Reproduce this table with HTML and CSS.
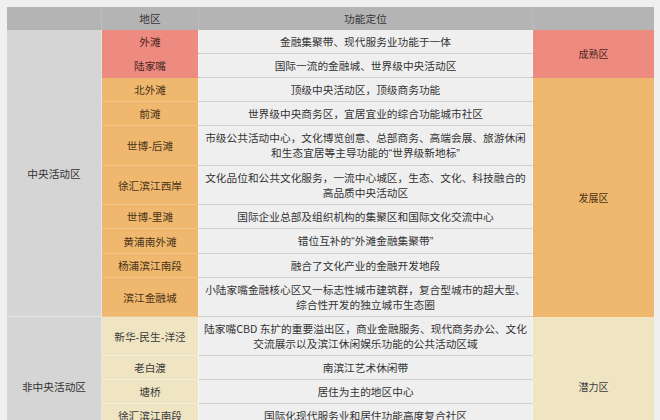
FILE: index.html
```html
<!DOCTYPE html>
<html lang="zh-CN">
<head>
<meta charset="utf-8">
<link rel="stylesheet" href="styles.css">
</head>
<body>
<table class="zones">
  <thead>
    <tr>
      <th class="c1"></th>
      <th class="c2">地区</th>
      <th class="c3">功能定位</th>
      <th class="c4"></th>
    </tr>
  </thead>
  <tbody>
    <tr>
      <td class="c1 cat" rowspan="10">中央活动区</td>
      <td class="c2 red">外滩</td>
      <td class="c3">金融集聚带、现代服务业功能于一体</td>
      <td class="c4 red lvl" rowspan="2">成熟区</td>
    </tr>
    <tr>
      <td class="c2 red">陆家嘴</td>
      <td class="c3">国际一流的金融城、世界级中央活动区</td>
    </tr>
    <tr>
      <td class="c2 orange">北外滩</td>
      <td class="c3">顶级中央活动区，顶级商务功能</td>
      <td class="c4 orange lvl" rowspan="8">发展区</td>
    </tr>
    <tr>
      <td class="c2 orange">前滩</td>
      <td class="c3">世界级中央商务区，宜居宜业的综合功能城市社区</td>
    </tr>
    <tr>
      <td class="c2 orange">世博-后滩</td>
      <td class="c3">市级公共活动中心，文化博览创意、总部商务、高端会展、旅游休闲<br>和生态宜居等主导功能的<span class="q">“</span>世界级新地标<span class="q">”</span></td>
    </tr>
    <tr>
      <td class="c2 orange">徐汇滨江西岸</td>
      <td class="c3">文化品位和公共文化服务，一流中心城区，生态、文化、科技融合的<br>高品质中央活动区</td>
    </tr>
    <tr>
      <td class="c2 orange">世博-里滩</td>
      <td class="c3">国际企业总部及组织机构的集聚区和国际文化交流中心</td>
    </tr>
    <tr>
      <td class="c2 orange">黄浦南外滩</td>
      <td class="c3">错位互补的<span class="q">“</span>外滩金融集聚带<span class="q">”</span></td>
    </tr>
    <tr>
      <td class="c2 orange">杨浦滨江南段</td>
      <td class="c3">融合了文化产业的金融开发地段</td>
    </tr>
    <tr>
      <td class="c2 orange">滨江金融城</td>
      <td class="c3">小陆家嘴金融核心区又一标志性城市建筑群，复合型城市的超大型、<br>综合性开发的独立城市生态圈</td>
    </tr>
    <tr>
      <td class="c1 cat lower" rowspan="4">非中央活动区</td>
      <td class="c2 cream">新华-民生-洋泾</td>
      <td class="c3">陆家嘴CBD 东扩的重要溢出区，商业金融服务、现代商务办公、文化<br>交流展示以及滨江休闲娱乐功能的公共活动区域</td>
      <td class="c4 cream lvl lower" rowspan="4">潜力区</td>
    </tr>
    <tr>
      <td class="c2 cream">老白渡</td>
      <td class="c3">南滨江艺术休闲带</td>
    </tr>
    <tr>
      <td class="c2 cream">塘桥</td>
      <td class="c3">居住为主的地区中心</td>
    </tr>
    <tr>
      <td class="c2 cream">徐汇滨江南段</td>
      <td class="c3">国际化现代服务业和居住功能高度复合社区</td>
    </tr>
  </tbody>
</table>
</body>
</html>
```

FILE: styles.css
```css
html, body {
  margin: 0;
  padding: 0;
  background: #f0f0f0;
}

body {
  padding: 7px 0 0 7px;
  font-family: "Noto Sans CJK SC", "Noto Sans", sans-serif;
  font-size: 10.7px;
  color: #333333;
}

.zones {
  border-collapse: collapse;
  border-spacing: 0;
  table-layout: fixed;
  width: 645px;
}

.zones th,
.zones td {
  padding: 4px 2px;
  line-height: 15px;
  text-align: center;
  vertical-align: middle;
  white-space: nowrap;
  font-weight: normal;
}

.zones th {
  background: #b4b4b4;
  height: 15px;
  padding: 4px 2px 4px;
  color: #333333;
  border-left: 1px solid #bcbcbc;
}

.zones th.c1 { border-left: none; }

.c1 { width: 90px; }
.c2 { width: 92px; }
.c3 { width: 329px; }
.c4 { width: 117px; }

td.c1 {
  background: #d5d5d5;
  border-bottom: 1px solid #e6e6e6;
  border-right: 1px solid #e4e4e4;
}

td.c3 {
  background: #efefef;
  border-bottom: 1px solid #d0d0d0;
  border-left: 1px solid #f6f6f6;
  border-right: 1px solid #f6f6f6;
}

.q {
  font-family: "Liberation Sans", sans-serif;
}

td.red {
  background: #ee8b80;
  color: #4a2520;
  border-bottom: 1px solid #ee8b80;
}

td.orange {
  background: #efb86e;
  color: #4a3418;
  border-bottom: 1px solid #f2c78c;
}

td.cream {
  background: #f0e5c3;
  color: #3a3a3a;
  border-bottom: 1px solid #f6eed6;
}

td.lvl {
  font-size: 10px;
  border-bottom: 1px solid #eeeeee;
}

td.c4.red { border-bottom-color: #ee8b80; }
td.c4.orange { border-bottom-color: #efb86e; }

.zones td.lower {
  padding-top: 32px;
}
```
